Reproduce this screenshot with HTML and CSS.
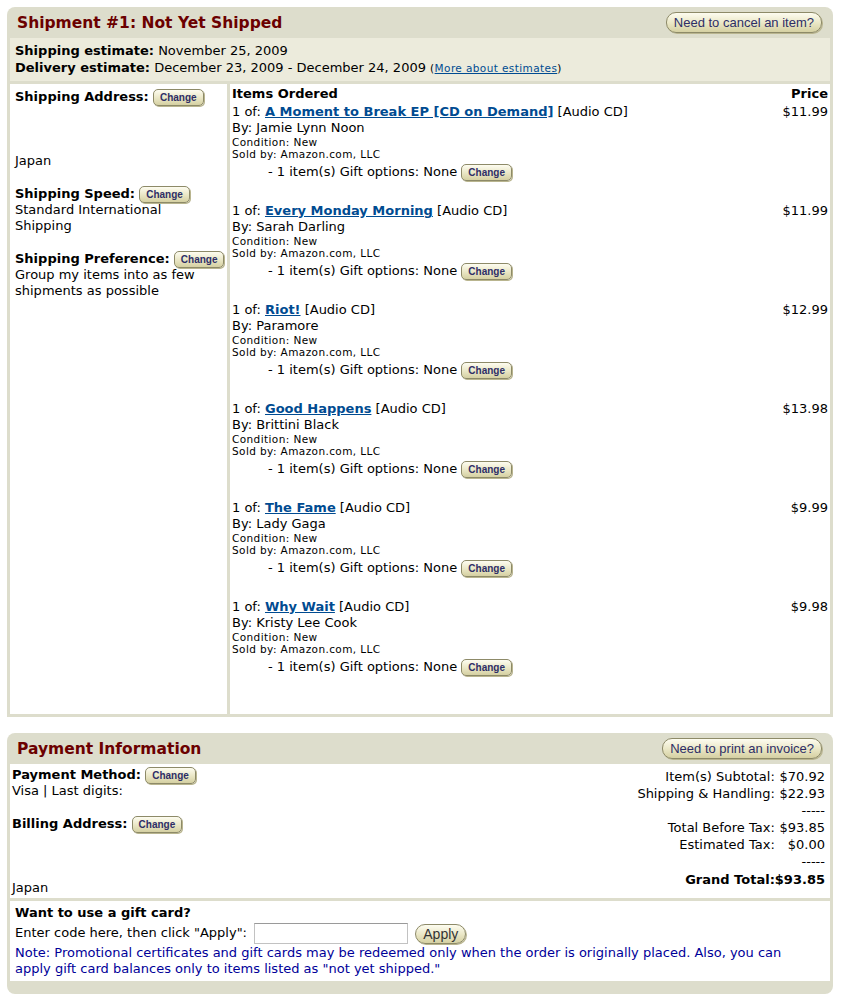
FILE: index.html
```html
<!DOCTYPE html>
<html lang="en">
<head>
    <meta charset="UTF-8">
    <title>Order Details</title>
    <link rel="stylesheet" href="styles.css">
</head>
<body>

<div class="box shipment">
    <div class="box-head">
        <h2>Shipment #1: Not Yet Shipped</h2>
        <a href="#" class="btn btn-pill">Need to cancel an item?</a>
    </div>

    <div class="estimates">
        <div><b>Shipping estimate:</b> November 25, 2009</div>
        <div><b>Delivery estimate:</b> December 23, 2009 - December 24, 2009 <span class="tiny">(<a href="#">More about estimates</a>)</span></div>
    </div>

    <div class="columns">
        <div class="side">
            <div class="section">
                <div class="label-line"><b>Shipping Address:</b> <a href="#" class="btn btn-small">Change</a></div>
                <div class="address-gap"></div>
                <div>Japan</div>
            </div>
            <div class="section">
                <div class="label-line"><b>Shipping Speed:</b> <a href="#" class="btn btn-small">Change</a></div>
                <div>Standard International Shipping</div>
            </div>
            <div class="section">
                <div class="label-line"><b>Shipping Preference:</b> <a href="#" class="btn btn-small">Change</a></div>
                <div>Group my items into as few shipments as possible</div>
            </div>
        </div>

        <div class="items">
            <div class="items-head">
                <b>Items Ordered</b>
                <b>Price</b>
            </div>

            <!-- one block per item -->
            <div class="item">
                <div class="item-info">
                    <div>1 of: <a href="#" class="title">A Moment to Break EP [CD on Demand]</a> [Audio CD]</div>
                    <div>By: Jamie Lynn Noon</div>
                    <div class="small">Condition: New</div>
                    <div class="small">Sold by: Amazon.com, LLC</div>
                    <div class="gift">- 1 item(s) Gift options: None <a href="#" class="btn btn-small">Change</a></div>
                </div>
                <div class="price">$11.99</div>
            </div>

            <div class="item">
                <div class="item-info">
                    <div>1 of: <a href="#" class="title">Every Monday Morning</a> [Audio CD]</div>
                    <div>By: Sarah Darling</div>
                    <div class="small">Condition: New</div>
                    <div class="small">Sold by: Amazon.com, LLC</div>
                    <div class="gift">- 1 item(s) Gift options: None <a href="#" class="btn btn-small">Change</a></div>
                </div>
                <div class="price">$11.99</div>
            </div>

            <div class="item">
                <div class="item-info">
                    <div>1 of: <a href="#" class="title">Riot!</a> [Audio CD]</div>
                    <div>By: Paramore</div>
                    <div class="small">Condition: New</div>
                    <div class="small">Sold by: Amazon.com, LLC</div>
                    <div class="gift">- 1 item(s) Gift options: None <a href="#" class="btn btn-small">Change</a></div>
                </div>
                <div class="price">$12.99</div>
            </div>

            <div class="item">
                <div class="item-info">
                    <div>1 of: <a href="#" class="title">Good Happens</a> [Audio CD]</div>
                    <div>By: Brittini Black</div>
                    <div class="small">Condition: New</div>
                    <div class="small">Sold by: Amazon.com, LLC</div>
                    <div class="gift">- 1 item(s) Gift options: None <a href="#" class="btn btn-small">Change</a></div>
                </div>
                <div class="price">$13.98</div>
            </div>

            <div class="item">
                <div class="item-info">
                    <div>1 of: <a href="#" class="title">The Fame</a> [Audio CD]</div>
                    <div>By: Lady Gaga</div>
                    <div class="small">Condition: New</div>
                    <div class="small">Sold by: Amazon.com, LLC</div>
                    <div class="gift">- 1 item(s) Gift options: None <a href="#" class="btn btn-small">Change</a></div>
                </div>
                <div class="price">$9.99</div>
            </div>

            <div class="item">
                <div class="item-info">
                    <div>1 of: <a href="#" class="title">Why Wait</a> [Audio CD]</div>
                    <div>By: Kristy Lee Cook</div>
                    <div class="small">Condition: New</div>
                    <div class="small">Sold by: Amazon.com, LLC</div>
                    <div class="gift">- 1 item(s) Gift options: None <a href="#" class="btn btn-small">Change</a></div>
                </div>
                <div class="price">$9.98</div>
            </div>
        </div>
    </div>
</div>

<div class="box payment">
    <div class="box-head">
        <h2>Payment Information</h2>
        <a href="#" class="btn btn-pill">Need to print an invoice?</a>
    </div>

    <div class="pay-body">
        <div class="pay-left">
            <div class="label-line"><b>Payment Method:</b> <a href="#" class="btn btn-small">Change</a></div>
            <div>Visa | Last digits:</div>
            <div class="label-line billing"><b>Billing Address:</b> <a href="#" class="btn btn-small">Change</a></div>
            <div class="address-gap"></div>
            <div>Japan</div>
        </div>

        <table class="totals">
            <tr><td>Item(s) Subtotal:</td><td>$70.92</td></tr>
            <tr><td>Shipping &amp; Handling:</td><td>$22.93</td></tr>
            <tr><td></td><td>-----</td></tr>
            <tr><td>Total Before Tax:</td><td>$93.85</td></tr>
            <tr><td>Estimated Tax:</td><td>$0.00</td></tr>
            <tr><td></td><td>-----</td></tr>
            <tr class="grand"><td>Grand Total:</td><td>$93.85</td></tr>
        </table>
    </div>

    <div class="gift-card">
        <div><b>Want to use a gift card?</b></div>
        <div class="code-line">
            Enter code here, then click "Apply":
            <input type="text" class="code-input">
            <a href="#" class="btn btn-apply">Apply</a>
        </div>
        <div class="note">Note: Promotional certificates and gift cards may be redeemed only when the order is originally placed. Also, you can apply gift card balances only to items listed as "not yet shipped."</div>
    </div>
</div>

</body>
</html>
```

FILE: styles.css
```css
body {
    font-family: "DejaVu Sans", Verdana, sans-serif;
    font-size: 13px;
    line-height: 16px;
    color: #000;
    background-color: #fff;
    margin: 0;
    padding: 7px 0 0 7px;
}
a {
    color: #004b91;
}
.box {
    width: 826px;
    box-sizing: border-box;
    background-color: #ddddcc;
    padding: 0 3px 3px;
}
.shipment {
    border-radius: 8px 8px 0 0;
}
.payment {
    margin-top: 16px;
    border-radius: 8px;
    padding-bottom: 13px;
}
.box-head {
    display: flex;
    justify-content: space-between;
    align-items: center;
    height: 31px;
    padding: 0 8px 0 7px;
}
.box-head h2 {
    margin: 0;
    font-size: 15.5px;
    font-weight: bold;
    color: #6b0000;
}

/* buttons */
.btn {
    display: inline-block;
    font-family: "Liberation Sans", Arial, sans-serif;
    color: #2e2e66;
    text-decoration: none;
    background: linear-gradient(#fdfcf0, #ebe8c8 50%, #d5d0a2);
    border: 1px solid #8d8a68;
    box-shadow: 1px 1px 0 #b9b58f;
    white-space: nowrap;
}
.btn-small {
    font-size: 10px;
    font-weight: bold;
    height: 15px;
    line-height: 15px;
    padding: 0 6px;
    border-radius: 5px;
    vertical-align: middle;
}
.btn-pill {
    font-size: 13px;
    height: 19px;
    line-height: 19px;
    padding: 0 7px;
    border-radius: 10px;
}
.btn-apply {
    font-size: 14px;
    height: 18px;
    line-height: 18px;
    padding: 0 7px;
    border-radius: 10px;
    color: #333;
    vertical-align: middle;
}

/* shipment */
.estimates {
    background-color: #ecebdc;
    padding: 4px 5px;
    line-height: 17px;
}
.tiny {
    font-size: 10.5px;
    letter-spacing: 0.4px;
}
.columns {
    display: flex;
    gap: 3px;
    margin-top: 3px;
}
.side {
    width: 217px;
    box-sizing: border-box;
    background-color: #fff;
    padding: 4px 5px 0;
}
.section {
    margin-bottom: 16px;
}
.label-line {
    height: 17px;
    line-height: 17px;
    white-space: nowrap;
}
.address-gap {
    height: 48px;
}
.items {
    flex: 1;
    background-color: #fff;
    padding: 2px 2px 16px;
}
.items-head {
    display: flex;
    justify-content: space-between;
    margin-bottom: 2px;
}
.item {
    display: flex;
    justify-content: space-between;
    margin-bottom: 22px;
}
.title {
    font-weight: bold;
}
.small {
    font-size: 10.5px;
    line-height: 12px;
    letter-spacing: 0.4px;
}
.gift {
    margin-top: 3px;
    height: 18px;
    line-height: 18px;
    padding-left: 36px;
}

/* payment */
.pay-body {
    display: flex;
    justify-content: space-between;
    align-items: flex-start;
    background-color: #fff;
    padding: 2px 5px 2px 2px;
}
.billing {
    margin-top: 16px;
}
.totals {
    border-spacing: 0;
    margin-top: 2px;
}
.totals td {
    padding: 0;
    height: 17px;
    text-align: right;
}
.grand td {
    font-weight: bold;
    height: 19px;
}
.gift-card {
    background-color: #fff;
    margin-top: 3px;
    padding: 4px 30px 4px 5px;
}
.code-line {
    height: 24px;
    line-height: 24px;
}
.code-input {
    width: 154px;
    height: 21px;
    box-sizing: border-box;
    border: 1px solid #c2c2c2;
    border-top-color: #9a9a9a;
    margin: 0 3px;
    padding: 0;
    vertical-align: middle;
}
.note {
    color: #000099;
}
```
